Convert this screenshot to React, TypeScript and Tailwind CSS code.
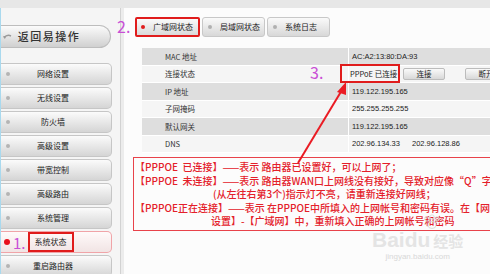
import React from "react";

const menuItems = [
  "网络设置",
  "无线设置",
  "防火墙",
  "高级设置",
  "带宽控制",
  "高级路由",
  "系统管理",
  "系统状态",
  "重启路由器",
];

const rows = [
  { label: "MAC 地址", value: "AC:A2:13:80:DA:93" },
  { label: "连接状态", value: "" },
  { label: "IP 地址", value: "119.122.195.165" },
  { label: "子网掩码", value: "255.255.255.255" },
  { label: "默认网关", value: "119.122.195.165" },
  { label: "DNS", value: "" },
];

function SideButton({ label, active }: { label: string; active?: boolean }) {
  if (active) {
    return (
      <div className="relative flex h-[22px] w-[111px] mb-[2px] items-center rounded-r-[5px] border border-l-0 border-[#f0a4a8] bg-linear-to-b from-[#fffafa] to-[#f1e4e4]">
        <span className="ml-[3px] h-[6px] w-[6px] rounded-full bg-[#e8101c]" />
        <span className="ml-[3px] text-[15px] leading-none text-[#c94fd6]">1.</span>
        <span className="ml-[2px] flex h-[20px] items-center border-2 border-[#e01c1c] px-[5px] text-[8px] text-[#222]">
          {label}
        </span>
      </div>
    );
  }
  return (
    <div className="flex h-[22px] w-[111px] mb-[2px] items-center rounded-r-[5px] border border-l-0 border-[#c6c6c6] bg-linear-to-b from-[#fbfbfb] to-[#d5d5d5]">
      <span className="ml-[5px] h-[4px] w-[4px] rounded-full bg-[#b4b4b4]" />
      <span className="flex-1 pr-[15px] text-center text-[8px] text-[#222]">{label}</span>
    </div>
  );
}

function Tab({ label, active }: { label: string; active?: boolean }) {
  return (
    <div
      className={
        active
          ? "flex h-[20px] w-[65px] items-center rounded-[2px] border-2 border-[#e01c1c] bg-linear-to-b from-[#fafafa] to-[#dadada]"
          : "flex h-[20px] w-[63px] items-center rounded-[3px] border border-[#c8c8c8] bg-linear-to-b from-[#fafafa] to-[#d8d8d8]"
      }
    >
      <span
        className={
          active
            ? "ml-[4px] h-[4px] w-[4px] rounded-full bg-[#e01c1c]"
            : "ml-[5px] h-[4px] w-[4px] rounded-full bg-[#b0b0b0]"
        }
      />
      <span className="ml-[8px] text-[8px] text-[#222]">{label}</span>
    </div>
  );
}

export default function App() {
  return (
    <div className="relative h-[274px] w-[490px] overflow-hidden bg-white font-['Noto_Sans_CJK_SC',sans-serif] text-[#333]">
      <div className="h-[8px] bg-[#e7e7e7]" />
      <div className="flex h-[266px]">
        {/* left menu */}
        <aside className="w-[120px] shrink-0 border-l border-[#a9d9ee] bg-[#f5f5f5] pt-[17px]">
          <div className="flex h-[23px] w-[110px] items-center rounded-r-full border border-l-0 border-[#bdbdbd] bg-linear-to-b from-[#fbfbfb] to-[#d0d0d0]">
            <svg width="9" height="8" viewBox="0 0 9 8" className="ml-[2px]">
              <path d="M1 5 Q4 1 8 3" stroke="#9a9a9a" strokeWidth="1.4" fill="none" />
              <path d="M0 3 L2 6 L3 3 Z" fill="#9a9a9a" />
            </svg>
            <span className="flex-1 pr-[24px] text-center text-[11px] font-medium tracking-[1.5px] text-[#333]">
              返回易操作
            </span>
          </div>
          <div className="mt-[15px]">
            {menuItems.map((item) => (
              <SideButton key={item} label={item} active={item === "系统状态"} />
            ))}
          </div>
        </aside>
        <div className="w-[4px] shrink-0 border-l border-[#d2d2d2] bg-[#ececec]" />

        {/* content */}
        <main className="min-w-0 flex-1 overflow-hidden bg-[#fcfcfc] pl-[11px] pt-[9px]">
          <div className="flex gap-[2px]">
            <Tab label="广域网状态" active />
            <Tab label="局域网状态" />
            <Tab label="系统日志" />
          </div>

          <div className="ml-[7px] mt-[11px]">
            {rows.map((row, i) => (
              <div
                key={row.label}
                className={
                  i % 2 === 0
                    ? "flex h-[17.5px] border-b border-white bg-[#dedede]"
                    : "flex h-[17.5px] border-b border-white bg-[#f5f5f5]"
                }
              >
                <div className="flex w-[206px] shrink-0 items-center pl-[23px] text-[7.5px] text-[#333]">
                  {row.label}
                </div>
                <div className="flex flex-1 items-center border-l border-white pl-[3px] font-['Liberation_Sans',sans-serif] text-[7.5px] whitespace-nowrap text-[#222]">
                  {row.label === "连接状态" ? (
                    <>
                      <span className="-ml-[12px] flex h-[19px] w-[60px] shrink-0 items-center border-2 border-[#e01c1c] pl-[8px] font-['Noto_Sans_CJK_SC',sans-serif]">
                        PPPoE 已连接
                      </span>
                      <span className="ml-[3px] flex h-[12px] w-[42px] shrink-0 items-center justify-center rounded-[2px] border border-[#bcbcbc] bg-linear-to-b from-[#fafafa] to-[#d8d8d8] font-['Noto_Sans_CJK_SC',sans-serif]">
                        连接
                      </span>
                      <span className="ml-[20px] flex h-[12px] w-[42px] shrink-0 items-center justify-center rounded-[2px] border border-[#bcbcbc] bg-linear-to-b from-[#fafafa] to-[#d8d8d8] font-['Noto_Sans_CJK_SC',sans-serif]">
                        断开
                      </span>
                    </>
                  ) : row.label === "DNS" ? (
                    <>
                      <span>202.96.134.33</span>
                      <span className="ml-[12px]">202.96.128.86</span>
                    </>
                  ) : (
                    row.value
                  )}
                </div>
              </div>
            ))}
          </div>

          <div className="-ml-[2px] mt-[4px] w-[380px] border border-[#e8424a] pl-[1px] pt-[2px] pb-[2px] text-[10px] leading-[13.5px] font-medium whitespace-pre text-[#e4202a]">
            <div>{"【PPPOE  已连接】——表示 路由器已设置好，可以上网了；"}</div>
            <div>{"【PPPOE  未连接】——表示 路由器WAN口上网线没有接好，导致对应像\u201cQ\u201d字样的"}</div>
            <div className="pl-[78px]">{"(从左往右第3个)指示灯不亮，请重新连接好网线；"}</div>
            <div>{"【PPPOE正在连接】——表示 在PPPOE中所填入的上网帐号和密码有误。在【网络"}</div>
            <div className="pl-[76px]">{"设置】-【广域网】中，重新填入正确的上网帐号和密码"}</div>
          </div>
        </main>
      </div>

      {/* annotations */}
      <span className="absolute left-[117px] top-[16px] text-[16px] leading-[20px] text-[#c94fd6]">2.</span>
      <span className="absolute left-[310px] top-[62px] text-[16px] leading-[20px] text-[#c94fd6]">3.</span>
      <svg className="absolute left-0 top-0" width="490" height="274">
        <line x1="298" y1="163" x2="342" y2="90" stroke="#ea1c24" strokeWidth="2" />
        <path d="M346 82 L337 92 L346 95 Z" fill="#ea1c24" />
      </svg>

      {/* watermark */}
      <div className="absolute left-[372px] top-[214px] flex flex-col items-center text-[#e4e4e4]">
        <svg width="20" height="16" viewBox="0 0 20 16" className="ml-[28px]">
          <circle cx="5" cy="5" r="2.2" fill="none" stroke="#dddddd" />
          <circle cx="10" cy="3" r="2.2" fill="none" stroke="#dddddd" />
          <circle cx="15" cy="5" r="2.2" fill="none" stroke="#dddddd" />
          <ellipse cx="10" cy="11" rx="4" ry="3.5" fill="none" stroke="#dddddd" />
        </svg>
        <div className="flex items-end">
          <span className="font-['Liberation_Sans',sans-serif] text-[21px] font-bold leading-[20px]">Baidu</span>
          <span className="ml-[3px] text-[15px] font-bold leading-[18px]">经验</span>
        </div>
        <span className="mt-[2px] font-['Liberation_Sans',sans-serif] text-[8px] leading-[9px] text-[#d8d8d8]">
          jingyan.baidu.com
        </span>
      </div>
    </div>
  );
}
